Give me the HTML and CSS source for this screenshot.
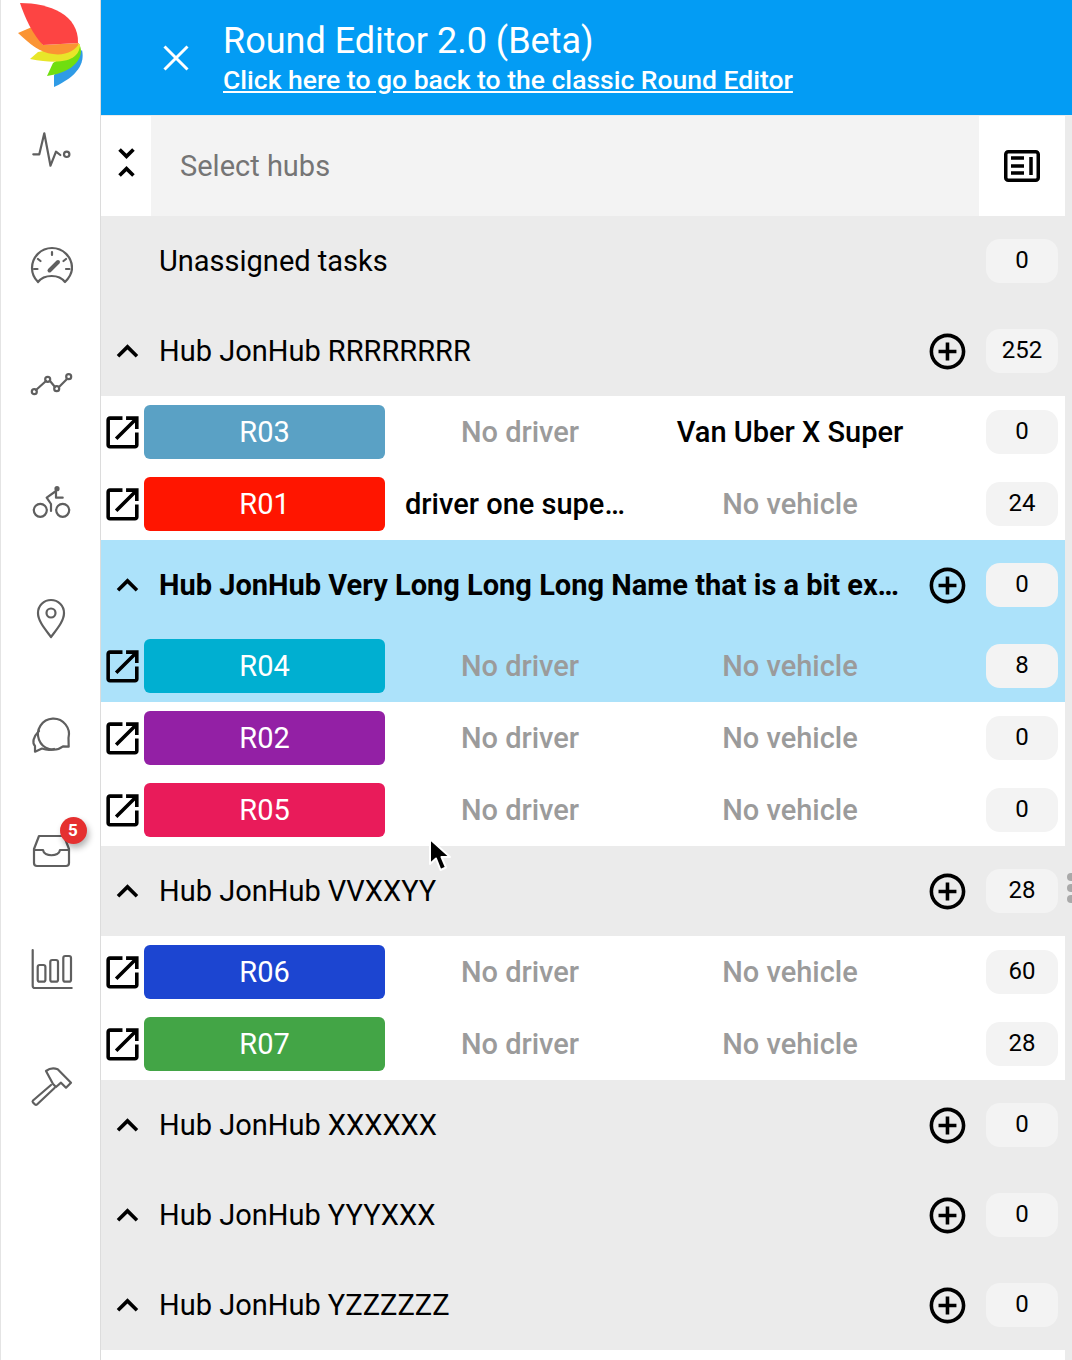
FILE: index.html
```html
<!DOCTYPE html>
<html lang="en">
<head>
  <meta charset="UTF-8">
  <title>Round Editor</title>
  <link rel="stylesheet" href="styles.css">
</head>
<body>
  <svg class="defs" width="0" height="0">
    <defs>
      <path id="i-open" d="M19 19H5V5h7V3H5c-1.11 0-2 .9-2 2v14c0 1.1.89 2 2 2h14c1.1 0 2-.9 2-2v-7h-2v7zM14 3v2h3.59l-9.83 9.83 1.41 1.41L19 6.41V10h2V3h-7z"/>
      <path id="i-chevron" d="M12 8l-6 6 1.41 1.41L12 10.83l4.59 4.58L18 14z"/>
      <path id="i-plus" d="M13 7h-2v4H7v2h4v4h2v-4h4v-2h-4V7zm-1-5C6.48 2 2 6.48 2 12s4.48 10 10 10 10-4.48 10-10S17.52 2 12 2zm0 18c-4.41 0-8-3.59-8-8s3.59-8 8-8 8 3.59 8 8-3.59 8-8 8z"/>
    </defs>
  </svg>

  <div class="app">
    <!-- Left navigation -->
    <nav class="sidebar">
      <svg class="logo" viewBox="0 0 100 90" width="100" height="90">
        <path fill="#2f9be6" d="M54 87V75L82 50C85 63 78 76 54 87z"/>
        <path fill="#70de10" d="M47 76L53 63L80 46C84 56 76 72 47 76z"/>
        <path fill="#e8e629" d="M30 59L38 52L80 44C80 56 70 67 30 59z"/>
        <path fill="#fb9433" d="M18 33L32 27L43 45L79 43C77 50 65 56 53 54C40 53 30 44 18 33z"/>
        <path fill="#fd4443" d="M20 3C50 3 79 15 78 43L43 45C33 35 25 18 20 3z"/>
      </svg>
      <div class="nav-list">
        <svg class="nav-icon" viewBox="0 0 44 44"><path d="M4.3 26.3h6l5-21 6.2 32.400 5.500-14 4.300 3.300"/><circle cx="37.700" cy="26.300" r="2.700"/></svg>
        <svg class="nav-icon" viewBox="0 0 44 44"><path d="M9 37C5 33 3 28 3 23a20 20 0 0 1 40 0c0 5-3 10-7 14-3-4-8-6-13.300-6-5.700 0-10.700 2-13.700 6z"/><path d="M23 7v3M9 14l2.500 2M37 14l-2.500 2M5 24h3.500M37 24h3.500"/><path class="thick" d="M20.500 25.500L29 17"/></svg>
        <svg class="nav-icon" viewBox="0 0 44 44"><path d="M7 28L17 19M21 19L26 25M30 25L38 17"/><circle cx="5.300" cy="29.700" r="2.500"/><circle cx="18.700" cy="17.300" r="2.500"/><circle cx="27.700" cy="26.700" r="2.500"/><circle cx="39.700" cy="14.700" r="2.500"/></svg>
        <svg class="nav-icon" viewBox="0 0 44 44"><circle cx="11.300" cy="31.300" r="6.500"/><circle cx="33.700" cy="31.300" r="6.500"/><circle class="solid" cx="28" cy="9.700" r="2.600"/><path d="M27 12L17.700 18.700L22 25V32M27 12V18.700H33.700"/></svg>
        <svg class="nav-icon" viewBox="0 0 44 44"><path d="M22 41C16 33 9 25 9 17a13 13 0 0 1 26 0c0 8-7 16-13 24z"/><circle cx="22" cy="17" r="4.500"/></svg>
        <svg class="nav-icon" viewBox="0 0 44 44"><path d="M39.700 33.700L34 33.400A15.500 15.500 0 1 1 39.500 25z"/><path d="M10 18C4 24 3 30 6 33v5.700L13 35.500c4 1.500 8 2 12 .5"/></svg>
        <div class="nav-item">
          <svg class="nav-icon" viewBox="0 0 44 44"><path d="M10 6H35L40 19V33a3 3 0 0 1-3 3H8a3 3 0 0 1-3-3V19z"/><path d="M5 20H14C15 27 30 27 31 20H40"/></svg>
          <span class="badge">5</span>
        </div>
        <svg class="nav-icon" viewBox="0 0 44 44"><path d="M3.700 3V39a2 2 0 0 0 2 2H42.700"/><rect x="8.700" y="18" width="7.700" height="16.700" rx="2"/><rect x="21.300" y="13" width="7.700" height="21.700" rx="2"/><rect x="34.300" y="9" width="7.700" height="25.700" rx="2"/></svg>
        <svg class="nav-icon" viewBox="0 0 44 44"><path d="M17 7C21 4 25 4 28.700 5.300L42 18.700L37 23.700L32 18.700L27 23L24 20L17 7z"/><path d="M22 21L4 36.500a1.500 1.500 0 0 0 0 2L6 40.500a1.500 1.500 0 0 0 2 0L25.500 24"/></svg>
      </div>
    </nav>

    <div class="main">
      <header class="top-bar">
        <svg class="close-icon" viewBox="0 0 26 26" width="26" height="26"><path d="M1.500 1.500L24.500 24.500M24.500 1.500L1.500 24.500"/></svg>
        <div class="top-text">
          <div class="top-title">Round Editor 2.0 (Beta)</div>
          <a class="top-link" href="#">Click here to go back to the classic Round Editor</a>
        </div>
      </header>

      <div class="content">
        <div class="toolbar">
          <div class="toggle-cell">
            <svg class="md-icon" viewBox="0 0 24 24"><path d="M7.410 18.590L8.830 20 12 16.830 15.170 20l1.410-1.410L12 14l-4.590 4.590zm9.180-13.180L15.170 4 12 7.170 8.830 4 7.410 5.410 12 10l4.590-4.590z"/></svg>
          </div>
          <div class="hub-select">Select hubs</div>
          <div class="view-cell">
            <svg class="view-icon" viewBox="0 0 36 32" width="36" height="32"><rect x="1.750" y="1.750" width="32.500" height="28.500" rx="2.500"/><path d="M7 8H20M7 16H20M7 23H20M27 7V25"/></svg>
          </div>
        </div>

        <div class="row hub">
          <span class="chevron-space"></span>
          <span class="hub-name">Unassigned tasks</span>
          <span class="count">0</span>
        </div>

        <div class="row hub">
          <svg class="md-icon"><use href="#i-chevron" transform="scale(1.790)"/></svg>
          <span class="hub-name">Hub JonHub RRRRRRRR</span>
          <svg class="md-icon"><use href="#i-plus" transform="scale(1.790)"/></svg>
          <span class="count">252</span>
        </div>
        <div class="row route">
          <svg class="md-icon"><use href="#i-open" transform="scale(1.790)"/></svg>
          <span class="route-tag tag-r03">R03</span>
          <span class="cell muted">No driver</span>
          <span class="cell">Van Uber X Super</span>
          <span class="count">0</span>
        </div>
        <div class="row route">
          <svg class="md-icon"><use href="#i-open" transform="scale(1.790)"/></svg>
          <span class="route-tag tag-r01">R01</span>
          <span class="cell driver-name">driver one super long name</span>
          <span class="cell muted">No vehicle</span>
          <span class="count">24</span>
        </div>

        <div class="row hub selected">
          <svg class="md-icon"><use href="#i-chevron" transform="scale(1.790)"/></svg>
          <span class="hub-name">Hub JonHub Very Long Long Long Name that is a bit excessive for this list</span>
          <svg class="md-icon"><use href="#i-plus" transform="scale(1.790)"/></svg>
          <span class="count">0</span>
        </div>
        <div class="row route selected">
          <svg class="md-icon"><use href="#i-open" transform="scale(1.790)"/></svg>
          <span class="route-tag tag-r04">R04</span>
          <span class="cell muted">No driver</span>
          <span class="cell muted">No vehicle</span>
          <span class="count">8</span>
        </div>
        <div class="row route">
          <svg class="md-icon"><use href="#i-open" transform="scale(1.790)"/></svg>
          <span class="route-tag tag-r02">R02</span>
          <span class="cell muted">No driver</span>
          <span class="cell muted">No vehicle</span>
          <span class="count">0</span>
        </div>
        <div class="row route">
          <svg class="md-icon"><use href="#i-open" transform="scale(1.790)"/></svg>
          <span class="route-tag tag-r05">R05</span>
          <span class="cell muted">No driver</span>
          <span class="cell muted">No vehicle</span>
          <span class="count">0</span>
        </div>

        <div class="row hub">
          <svg class="md-icon"><use href="#i-chevron" transform="scale(1.790)"/></svg>
          <span class="hub-name">Hub JonHub VVXXYY</span>
          <svg class="md-icon"><use href="#i-plus" transform="scale(1.790)"/></svg>
          <span class="count">28</span>
          <span class="drag-dots"><i></i><i></i><i></i></span>
        </div>
        <div class="row route">
          <svg class="md-icon"><use href="#i-open" transform="scale(1.790)"/></svg>
          <span class="route-tag tag-r06">R06</span>
          <span class="cell muted">No driver</span>
          <span class="cell muted">No vehicle</span>
          <span class="count">60</span>
        </div>
        <div class="row route">
          <svg class="md-icon"><use href="#i-open" transform="scale(1.790)"/></svg>
          <span class="route-tag tag-r07">R07</span>
          <span class="cell muted">No driver</span>
          <span class="cell muted">No vehicle</span>
          <span class="count">28</span>
        </div>

        <div class="row hub">
          <svg class="md-icon"><use href="#i-chevron" transform="scale(1.790)"/></svg>
          <span class="hub-name">Hub JonHub XXXXXX</span>
          <svg class="md-icon"><use href="#i-plus" transform="scale(1.790)"/></svg>
          <span class="count">0</span>
        </div>
        <div class="row hub">
          <svg class="md-icon"><use href="#i-chevron" transform="scale(1.790)"/></svg>
          <span class="hub-name">Hub JonHub YYYXXX</span>
          <svg class="md-icon"><use href="#i-plus" transform="scale(1.790)"/></svg>
          <span class="count">0</span>
        </div>
        <div class="row hub">
          <svg class="md-icon"><use href="#i-chevron" transform="scale(1.790)"/></svg>
          <span class="hub-name">Hub JonHub YZZZZZZ</span>
          <svg class="md-icon"><use href="#i-plus" transform="scale(1.790)"/></svg>
          <span class="count">0</span>
        </div>
        <div class="list-end"></div>
      </div>
    </div>
  </div>

  <!-- Mouse pointer caught in the capture -->
  <svg class="pointer" viewBox="0 0 24 36" width="24" height="36">
    <path d="M3 2V27L9 21.500L13.500 33L19 30.500L14.500 20H23z" fill="#000" stroke="#fff" stroke-width="2" stroke-linejoin="round"/>
  </svg>
</body>
</html>
```

FILE: styles.css
```css
html, body {
  margin: 0;
  padding: 0;
}

body {
  height: 1360px;
  overflow: hidden;
  background: #fff;
  font-family: Roboto, "Liberation Sans", sans-serif;
  font-size: 29px;
  color: #000;
}

.defs {
  position: absolute;
}

.app {
  display: flex;
  height: 1360px;
}

/* Sidebar */
.sidebar {
  flex: 0 0 99px;
  border-left: 1px solid #e4e4e4;
  border-right: 1px solid #dcdcdc;
  box-sizing: content-box;
  width: 99px;
  margin-left: 0;
  background: #fff;
  display: flex;
  flex-direction: column;
  align-items: center;
}

.logo {
  display: block;
  margin-left: -1px;
  flex: none;
}

.nav-list {
  display: flex;
  flex-direction: column;
  align-items: center;
  gap: 73px;
  padding-top: 38px;
}

.nav-item {
  position: relative;
  height: 44px;
}

.nav-icon {
  display: block;
  width: 44px;
  height: 44px;
  fill: none;
  stroke: #5f5f5f;
  stroke-width: 2.200;
  stroke-linejoin: round;
  stroke-linecap: round;
}

.nav-icon .thick {
  stroke-width: 4;
}

.nav-icon .solid {
  fill: #5f5f5f;
  stroke: none;
}

.badge {
  position: absolute;
  left: 31px;
  top: -13px;
  width: 27px;
  height: 27px;
  border-radius: 50%;
  background: #e53030;
  box-shadow: 2px 4px 6px rgba(0, 0, 0, 0.3);
  color: #fff;
  font-size: 17px;
  font-weight: 700;
  line-height: 27px;
  text-align: center;
}

/* Header */
.main {
  flex: 1;
  min-width: 0;
  display: flex;
  flex-direction: column;
}

.top-bar {
  flex: 0 0 115px;
  background: #039cf4;
  color: #fff;
  display: flex;
  align-items: center;
  padding-left: 62px;
  gap: 34px;
}

.close-icon {
  fill: none;
  stroke: #fff;
  stroke-width: 3;
  flex: none;
}

.top-title {
  font-size: 36px;
  line-height: 42px;
}

.top-link {
  color: #fff;
  font-size: 26.500px;
  font-weight: 500;
  line-height: 30px;
  text-decoration: underline;
}

/* List */
.content {
  flex: 1;
  background: #ebebeb;
  padding-right: 7px;
}

.toolbar {
  display: flex;
  height: 100px;
  margin-top: 1px;
  background: #fff;
}

.toggle-cell {
  flex: 0 0 50px;
  padding: 0 0 8px 4px;
  box-sizing: border-box;
  display: flex;
  align-items: center;
}

.md-icon {
  flex: none;
  width: 43px;
  height: 43px;
}

.hub-select {
  flex: 1;
  background: #f3f3f3;
  color: #757575;
  padding-left: 29px;
  line-height: 100px;
}

.view-cell {
  flex: 0 0 86px;
  display: flex;
  align-items: center;
  justify-content: center;
}

.view-icon {
  fill: none;
  stroke: #000;
  stroke-width: 3.500;
}

.row {
  position: relative;
  display: flex;
  align-items: center;
  box-sizing: border-box;
}

.hub {
  height: 90px;
  padding-left: 5px;
}

.route {
  height: 72px;
  background: #fff;
}

.selected {
  background: #ace2fa;
}

.chevron-space {
  flex: 0 0 43px;
}

.hub-name {
  flex: 1;
  min-width: 0;
  margin-left: 10px;
  padding-right: 20px;
  white-space: nowrap;
  overflow: hidden;
  text-overflow: ellipsis;
}

.hub.selected .hub-name {
  font-weight: 700;
}

.route-tag {
  flex: 0 0 241px;
  height: 54px;
  border-radius: 6px;
  color: #fff;
  line-height: 54px;
  text-align: center;
}

.tag-r03 { background: #5aa1c5; }
.tag-r01 { background: #ff1500; }
.tag-r04 { background: #00afd1; }
.tag-r02 { background: #9320a5; }
.tag-r05 { background: #e91b5a; }
.tag-r06 { background: #1c45d1; }
.tag-r07 { background: #43a546; }

.cell {
  flex: 0 0 270px;
  padding: 0 20px;
  box-sizing: border-box;
  text-align: center;
  white-space: nowrap;
  overflow: hidden;
  text-overflow: ellipsis;
  font-weight: 500;
}

.muted {
  color: #9b9b9b;
}

.count {
  flex: none;
  width: 72px;
  height: 44px;
  margin: 0 7px 0 auto;
  border-radius: 14px;
  background: #f3f3f3;
  font-size: 24px;
  line-height: 42px;
  text-align: center;
}

.hub .md-icon + .hub-name + .md-icon {
  margin-left: 0;
  margin-right: 17px;
}

.hub .md-icon + .hub-name + .md-icon + .count {
  margin-left: 0;
}

.drag-dots {
  position: absolute;
  right: -7px;
  top: 27px;
  display: flex;
  flex-direction: column;
  gap: 3px;
  width: 5px;
  overflow: hidden;
}

.drag-dots i {
  display: block;
  width: 8px;
  height: 8px;
  border-radius: 50%;
  background: #a9a9a9;
}

.list-end {
  height: 10px;
  background: #fff;
}

.pointer {
  position: absolute;
  left: 427px;
  top: 837px;
}
```
